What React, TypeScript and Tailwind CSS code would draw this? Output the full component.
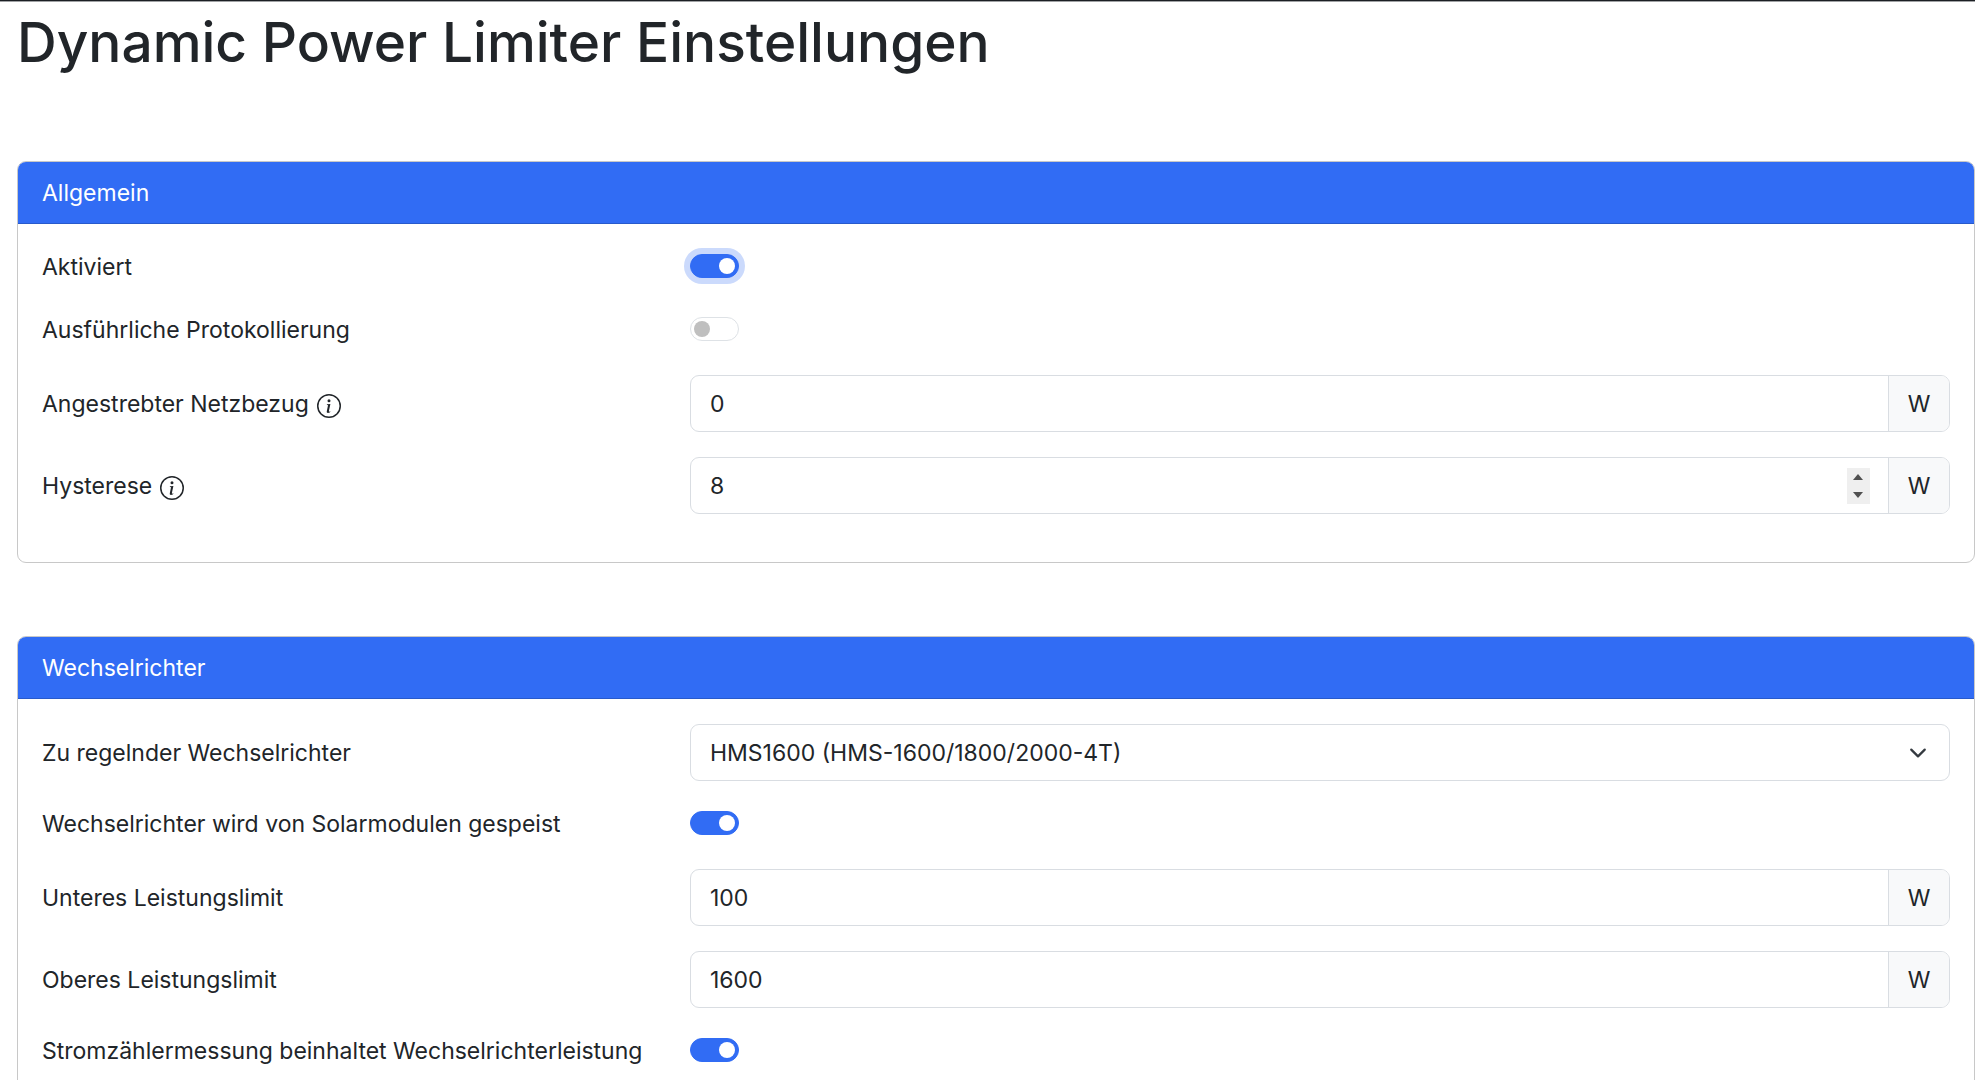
import React, { useState } from 'react';
import { BsInfoCircle } from 'react-icons/bs';

const Card: React.FC<{ title: string; children: React.ReactNode }> = ({ title, children }) => (
    <section className="overflow-hidden rounded-[9px] border border-[#c8c8c8] bg-white">
        <h2 className="flex h-[62px] items-center border-b border-[#285acb] bg-[#316cf4] px-6 text-[23px] leading-9 text-white">
            {title}
        </h2>
        <div className="flex flex-col gap-[25px] px-6 pt-[25px] pb-12">{children}</div>
    </section>
);

interface RowProps {
    id: string;
    label: string;
    info?: boolean;
    children: React.ReactNode;
}

const Row: React.FC<RowProps> = ({ id, label, info, children }) => (
    <div className="-mx-[18px] flex">
        <label htmlFor={id} className="flex w-1/3 items-center gap-2 px-[18px] whitespace-nowrap">
            {label}
            {info && <BsInfoCircle className="mt-1 size-6 shrink-0" />}
        </label>
        <div className="w-2/3 px-[18px]">{children}</div>
    </div>
);

interface SwitchRowProps {
    id: string;
    label: string;
    initial?: boolean;
    autoFocus?: boolean;
}

const SwitchRow: React.FC<SwitchRowProps> = ({ id, label, initial = false, autoFocus }) => {
    const [checked, setChecked] = useState(initial);

    return (
        <div className="-mx-[18px] flex h-[38px] items-start">
            <label htmlFor={id} className="w-1/3 px-[18px] leading-9 whitespace-nowrap">
                {label}
            </label>
            <div className="flex h-[34px] w-2/3 items-center px-[18px]">
                <input
                    id={id}
                    type="checkbox"
                    role="switch"
                    autoFocus={autoFocus}
                    checked={checked}
                    onChange={(e) => setChecked(e.target.checked)}
                    className="flex h-6 w-[49px] appearance-none items-center rounded-full border border-[#dee2e6] bg-white px-[3px] outline-none before:size-4 before:rounded-full before:bg-[#bfbfbf] checked:justify-end checked:border-[#316cf4] checked:bg-[#316cf4] checked:before:bg-white focus:shadow-[0_0_0_6px_#cbdafc]"
                />
            </div>
        </div>
    );
};

interface NumberRowProps {
    id: string;
    label: string;
    initial: string;
    info?: boolean;
    spinner?: boolean;
}

const NumberRow: React.FC<NumberRowProps> = ({ id, label, initial, info, spinner }) => {
    const [value, setValue] = useState(initial);
    const step = (delta: number) => setValue(String(Number(value) + delta));

    return (
        <Row id={id} label={label} info={info}>
            <div className="flex h-[57px] overflow-hidden rounded-[9px] border border-[#d9dde2]">
                <input
                    id={id}
                    type="number"
                    value={value}
                    onChange={(e) => setValue(e.target.value)}
                    className="min-w-0 flex-1 appearance-none px-[19px] outline-none [appearance:textfield]"
                />
                {spinner && (
                    <div className="mr-[18px] flex w-[23px] flex-col self-center bg-[#efefef]">
                        <button type="button" aria-label="Erhöhen" onClick={() => step(1)} className="flex h-[18px] items-center justify-center">
                            <svg viewBox="0 0 10 6" className="h-[6px] w-[10px]" fill="#505050"><path d="M0 6 5 0l5 6z" /></svg>
                        </button>
                        <button type="button" aria-label="Verringern" onClick={() => step(-1)} className="flex h-[18px] items-center justify-center">
                            <svg viewBox="0 0 10 6" className="h-[6px] w-[10px]" fill="#505050"><path d="M0 0l5 6 5-6z" /></svg>
                        </button>
                    </div>
                )}
                <span className="flex w-[61px] items-center justify-center border-l border-[#d9dde2] bg-[#f8f9fa]">W</span>
            </div>
        </Row>
    );
};

const App: React.FC = () => (
    <div className="min-h-screen bg-white font-['Inter',sans-serif] text-[23px] leading-9 text-[#212529]">
        <div className="h-[2px] border-t border-[#1c1f24] bg-[#a0a2a4]" />
        <main className="pl-[17px]">
            <h1 className="pt-1 text-[55px] leading-[72px] font-medium">Dynamic Power Limiter Einstellungen</h1>
            <form className="mt-[83px] flex flex-col gap-[73px]" onSubmit={(e) => e.preventDefault()}>
                <Card title="Allgemein">
                    <SwitchRow id="enabled" label="Aktiviert" initial autoFocus />
                    <SwitchRow id="verbose" label="Ausführliche Protokollierung" />
                    <NumberRow id="target" label="Angestrebter Netzbezug" initial="0" info />
                    <NumberRow id="hysteresis" label="Hysterese" initial="8" info spinner />
                </Card>
                <Card title="Wechselrichter">
                    <Row id="inverter" label="Zu regelnder Wechselrichter">
                        <div className="relative">
                            <select
                                id="inverter"
                                className="block h-[57px] w-full appearance-none rounded-[9px] border border-[#d9dde2] bg-white px-[19px] outline-none"
                            >
                                <option>HMS1600 (HMS-1600/1800/2000-4T)</option>
                            </select>
                            <svg
                                viewBox="0 0 16 16"
                                className="pointer-events-none absolute top-5 right-5 h-[18px] w-6"
                                fill="none"
                                stroke="#343a40"
                                strokeLinecap="round"
                                strokeLinejoin="round"
                                strokeWidth="2"
                            >
                                <path d="m2 5 6 6 6-6" />
                            </svg>
                        </div>
                    </Row>
                    <SwitchRow id="solar" label="Wechselrichter wird von Solarmodulen gespeist" initial />
                    <NumberRow id="lower" label="Unteres Leistungslimit" initial="100" />
                    <NumberRow id="upper" label="Oberes Leistungslimit" initial="1600" />
                    <SwitchRow id="behind-meter" label="Stromzählermessung beinhaltet Wechselrichterleistung" initial />
                </Card>
            </form>
        </main>
    </div>
);

export default App;
